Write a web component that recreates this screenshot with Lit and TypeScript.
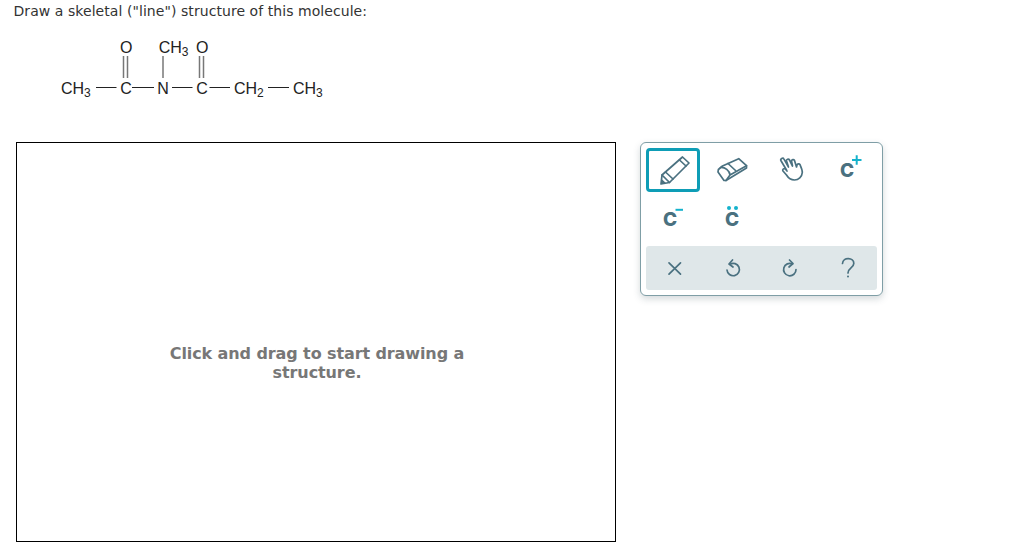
import { LitElement, html, css, svg } from "lit";
import { customElement } from "lit/decorators.js";

const bonds = [
  [96, 87.5, 116.5, 87.5], [132, 87.5, 154, 87.5], [172, 87.5, 192.5, 87.5],
  [209.5, 87.5, 230, 87.5], [268, 87.5, 289, 87.5],
];
const greyBonds = [
  [123.5, 56, 123.5, 78], [127.5, 56, 127.5, 78], [163, 56, 163, 78],
  [199.5, 56, 199.5, 78], [203.5, 56, 203.5, 78],
];
const labels: [number, number, string, string?, number?][] = [
  [61, 94, "CH", "3"], [120.3, 94, "C"], [157.3, 94, "N"], [196.3, 94, "C"],
  [234, 94, "CH", "2"], [293, 94, "CH", "3"],
  [120, 53, "O"], [158.7, 53, "CH", "3"], [196, 53, "O"],
];

const ic = (col: number, y: number, body: unknown) => html`<svg class="ic" viewBox="${649 + col * 58} ${y} 48 38">${body}</svg>`;

@customElement("app-root")
export class AppRoot extends LitElement {
  static styles = css`
    :host { display: block; width: 1023px; height: 560px; background: #fff; overflow: hidden; font-family: "DejaVu Sans", Verdana, sans-serif; }
    .page { padding: 3px 0 0 13.5px; display: flex; flex-direction: column; }
    .prompt { margin: 0; font-size: 14px; line-height: 16px; color: #333; letter-spacing: 0.06px; }
    .mol { display: block; width: 340px; height: 107px; margin-left: -13.5px; }
    .mol text { font-family: "Liberation Sans", Arial, sans-serif; font-size: 16px; fill: #222; }
    .mol .sub { font-size: 12px; }
    .work { display: flex; align-items: flex-start; gap: 24px; margin: 16px 0 0 2.5px; }
    .canvas { box-sizing: border-box; width: 600px; height: 400px; border: 1px solid #000; display: flex; align-items: center; justify-content: center; padding: 41px 0 0 2px; text-align: center; }
    .hint { width: 340px; font-size: 16px; line-height: 19px; font-weight: 700; color: #777; letter-spacing: -0.1px; }
    .tools { box-sizing: border-box; width: 243px; height: 154px; padding: 5px; border: 1px solid #7f9ea6; border-radius: 6px; background: #fff; box-shadow: 0 3px 7px rgba(60, 80, 90, .22); display: flex; flex-direction: column; }
    .grid { display: grid; grid-template-columns: 58px 58px 58px 57px; grid-auto-rows: 44px; }
    .grid.top { row-gap: 4px; margin-bottom: 6px; }
    .grid.bar { background: #dfe7e9; border-radius: 3px; }
    .tool { box-sizing: border-box; width: 54px; height: 44px; border: 3px solid transparent; border-radius: 4px; }
    .tool.on { border-color: #0e9db6; }
    .ic { display: block; width: 48px; height: 38px; fill: none; stroke: #4a7180; stroke-width: 1.7; stroke-linejoin: round; stroke-linecap: round; }
    .ic text { font-family: Inter, sans-serif; font-size: 19px; font-weight: 800; fill: #4a7180; stroke: none; }
    .ic .cy { stroke: #14b2cc; stroke-width: 2; stroke-linecap: butt; }
    .ic .dot { fill: #14b2cc; stroke: none; }
    .ic .fillc { fill: #4a7180; stroke: none; }
  `;

  render() {
    return html`<div class="page">
      <p class="prompt">Draw a skeletal ("line") structure of this molecule:</p>
      <svg class="mol" viewBox="0 19 340 107">
        ${greyBonds.map(b => svg`<line x1=${b[0]} y1=${b[1]} x2=${b[2]} y2=${b[3]} stroke="#777" stroke-width="1.5"/>`)}
        ${bonds.map(b => svg`<line x1=${b[0]} y1=${b[1]} x2=${b[2]} y2=${b[3]} stroke="#222" stroke-width="1"/>`)}
        ${labels.map(l => svg`<text x=${l[0]} y=${l[1]}>${l[2]}${l[3] ? svg`<tspan class="sub" dy="3">${l[3]}</tspan>` : ""}</text>`)}
      </svg>
      <div class="work">
        <div class="canvas"><div class="hint">Click and drag to start drawing a structure.</div></div>
        <div class="tools">
          <div class="grid top">
            <div class="tool on">${ic(0, 151, svg`
              <path d="M682.5 157 L689 163 L669.5 182.5 L661 184 L662 175 Z"/>
              <path d="M662 175 L669.5 182.5 M665.5 172 L673 179 M679.5 160 L686 166"/>
              <path class="fillc" d="M661 184 L661.6 179 L666 183 Z"/>`)}</div>
            <div class="tool">${ic(1, 151, svg`
              <path d="M738.7 158.7 L746.5 165.7 L746.5 168 L726 180.5 L724 180.5 L718 172 L718.4 169.5 L722.5 166 Z"/>
              <path d="M720.5 167.5 C725 167 729.5 170.5 730 175 L726 180.5 M730 175 L746.5 165.7 M728 163.5 L735.5 170.5"/>`)}</div>
            <div class="tool">${ic(2, 151, svg`
              <path d="M786.5 170 L781 160.7 a1.7 1.7 0 0 1 3 -1.6 L788.5 167 L786.5 161 a1.6 1.6 0 0 1 3 -1 L792.5 166 L791.5 161 a1.6 1.6 0 0 1 3 -.6 L796.5 167 L797 165 a1.6 1.6 0 0 1 3 -.3 C801.5 168 802.5 170 802.3 172.5 C802 177 798.5 180 794.5 180 C790.5 180 788 177.5 786.5 175 L783 171 a1.5 1.5 0 0 1 2.5 -1.7 L787 171"/>`)}</div>
            <div class="tool">${ic(3, 151, svg`
              <text x="840" y="177">C</text>
              <path class="cy" d="M852 160 H861.5 M856.7 155.3 V164.7"/>`)}</div>
            <div class="tool">${ic(0, 199, svg`
              <text x="663" y="226">C</text>
              <path class="cy" d="M675.5 209.8 H683"/>`)}</div>
            <div class="tool">${ic(1, 199, svg`
              <text x="725" y="226">C</text>
              <circle class="dot" cx="729" cy="208" r="2"/><circle class="dot" cx="736" cy="208" r="2"/>`)}</div>
          </div>
          <div class="grid bar">
            <div class="tool">${ic(0, 249, svg`<path d="M669 262.8 L680.5 274.2 M680.5 262.8 L669 274.2"/>`)}</div>
            <div class="tool">${ic(1, 249, svg`
              <path d="M730 264.2 A6.2 6.2 0 1 1 727 270"/>
              <path d="M732.5 260 L729 264 L733 267"/>`)}</div>
            <div class="tool">${ic(2, 249, svg`
              <path d="M792.5 264 A6.2 6.2 0 1 0 796 269.5"/>
              <path d="M789.5 260 L793 263.5 L789 267"/>`)}</div>
            <div class="tool">${ic(3, 249, svg`
              <path d="M842.5 263.5 C843 256.5 854 257.5 853.8 263.5 C853.7 268 848 268 848 273"/>
              <circle class="fillc" cx="848" cy="276.5" r="1"/>`)}</div>
          </div>
        </div>
      </div>
    </div>`;
  }
}
